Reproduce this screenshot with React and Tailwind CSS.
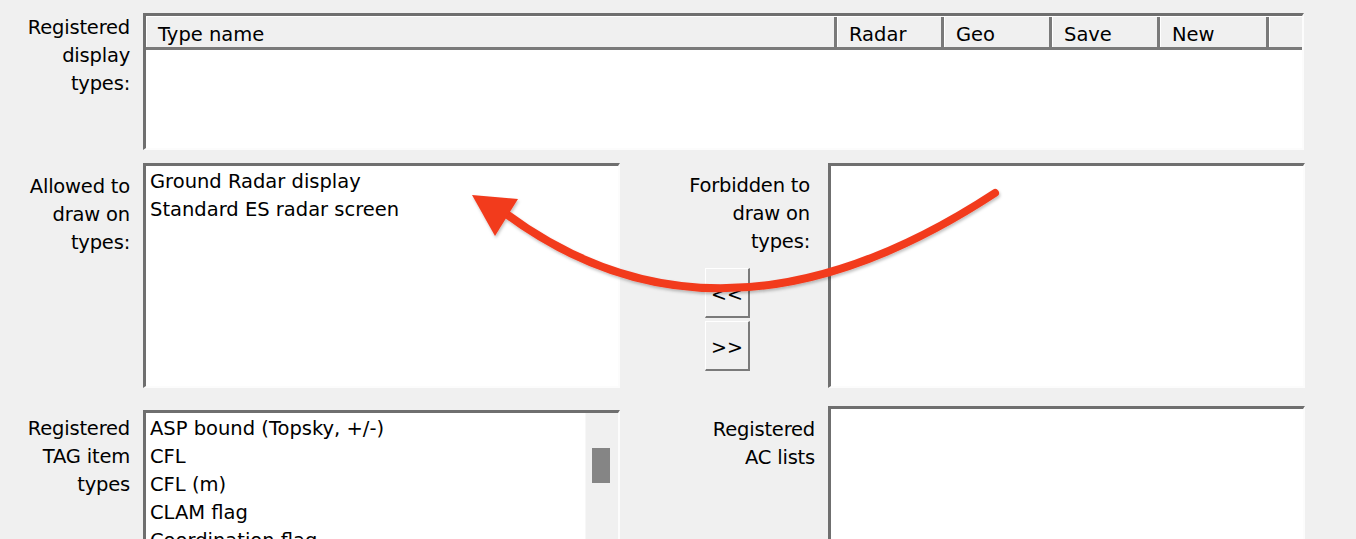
import React from "react";

const font = { fontFamily: '"DejaVu Sans", "Liberation Sans", sans-serif' };

function Sunken({ className = "", children }) {
  return (
    <div
      className={`border-t-[3px] border-l-[3px] border-r-2 border-b-2 border-t-[#6f6f6f] border-l-[#6f6f6f] border-r-[#fcfcfc] border-b-[#fcfcfc] bg-white ${className}`}
    >
      {children}
    </div>
  );
}

function Label({ lines, className = "" }) {
  return (
    <div className={`text-right leading-[28px] text-[19.5px] tracking-[-0.2px] text-black ${className}`}>
      {lines.map((line) => (
        <div key={line}>{line}</div>
      ))}
    </div>
  );
}

function HeaderCell({ children, className = "" }) {
  return (
    <div
      className={`h-full border-r-[3px] border-r-[#7a7a7a] border-l border-l-white pl-[11px] pt-[2px] leading-[32px] ${className}`}
    >
      {children}
    </div>
  );
}

function ArrowButton({ children }) {
  return (
    <button className="w-[45px] h-[50px] pt-[4px] bg-[#f0f0f0] border-t border-l border-t-white border-l-white border-r-2 border-b-2 border-r-[#7a7a7a] border-b-[#7a7a7a] text-[19px] leading-none text-black">
      {children}
    </button>
  );
}

export default function App() {
  const tagItems = ["ASP bound (Topsky, +/-)", "CFL", "CFL (m)", "CLAM flag", "Coordination flag"];

  return (
    <div
      className="relative w-[1356px] h-[539px] overflow-hidden bg-[#f0f0f0] text-[19.5px] text-black"
      style={font}
    >
      {/* registered display types */}
      <div className="flex pt-[13px]">
        <Label className="w-[130px] pt-[1px]" lines={["Registered", "display", "types:"]} />
        <Sunken className="ml-[13px] w-[1161px] h-[137px] flex flex-col">
          <div className="flex h-[34px] bg-[#f0f0f0] border-b-[3px] border-b-[#7a7a7a] border-t border-t-white">
            <HeaderCell className="w-[691px]">Type name</HeaderCell>
            <HeaderCell className="w-[107px]">Radar</HeaderCell>
            <HeaderCell className="w-[108px]">Geo</HeaderCell>
            <HeaderCell className="w-[108px]">Save</HeaderCell>
            <HeaderCell className="w-[109px]">New</HeaderCell>
            <div className="flex-1 border-l border-l-white" />
          </div>
          <div className="flex-1 bg-white" />
        </Sunken>
      </div>

      {/* allowed / forbidden */}
      <div className="flex mt-[13px]">
        <Label className="w-[130px] pt-[10px]" lines={["Allowed to", "draw on", "types:"]} />
        <Sunken className="ml-[13px] w-[477px] h-[225px] pt-[2px] pl-[4px] leading-[28px]">
          <div>Ground Radar display</div>
          <div>Standard ES radar screen</div>
        </Sunken>
        <div className="w-[208px] flex flex-col">
          <Label className="pr-[18px] pt-[9px]" lines={["Forbidden to", "draw on", "types:"]} />
          <div className="ml-[85px] mt-[12px] flex flex-col gap-[3px]">
            <ArrowButton>&lt;&lt;</ArrowButton>
            <ArrowButton>&gt;&gt;</ArrowButton>
          </div>
        </div>
        <Sunken className="w-[477px] h-[225px]" />
      </div>

      {/* tag items / ac lists */}
      <div className="flex mt-[18px]">
        <Label className="w-[130px] pt-[9px]" lines={["Registered", "TAG item", "types"]} />
        <Sunken className="ml-[13px] mt-[4px] w-[477px] h-[160px] flex">
          <div className="flex-1 pt-[2px] pl-[4px] leading-[28px] whitespace-nowrap overflow-hidden">
            {tagItems.map((item) => (
              <div key={item}>{item}</div>
            ))}
          </div>
          <div className="w-[33px] bg-[#f0f0f0] border-l border-l-[#f7f7f7] pt-[35px] pl-[6px]">
            <div className="w-[18px] h-[35px] bg-[#858585]" />
          </div>
        </Sunken>
        <div className="w-[195px]">
          <Label className="pt-[10px]" lines={["Registered", "AC lists"]} />
        </div>
        <Sunken className="ml-[13px] w-[477px] h-[160px]" />
      </div>

      {/* annotation arrow */}
      <svg
        className="absolute inset-0 pointer-events-none"
        width="1356"
        height="539"
        viewBox="0 0 1356 539"
      >
        <defs>
          <filter id="shadow" x="-10%" y="-10%" width="120%" height="130%">
            <feDropShadow dx="1" dy="2" stdDeviation="1.5" floodColor="#000" floodOpacity="0.25" />
          </filter>
        </defs>
        <g filter="url(#shadow)">
          <path
            d="M995 193 Q 720 373 505 213"
            fill="none"
            stroke="#f23a1e"
            strokeWidth="8"
            strokeLinecap="round"
          />
          <polygon points="472,195 518,199 495,236" fill="#f23a1e" />
        </g>
      </svg>
    </div>
  );
}
